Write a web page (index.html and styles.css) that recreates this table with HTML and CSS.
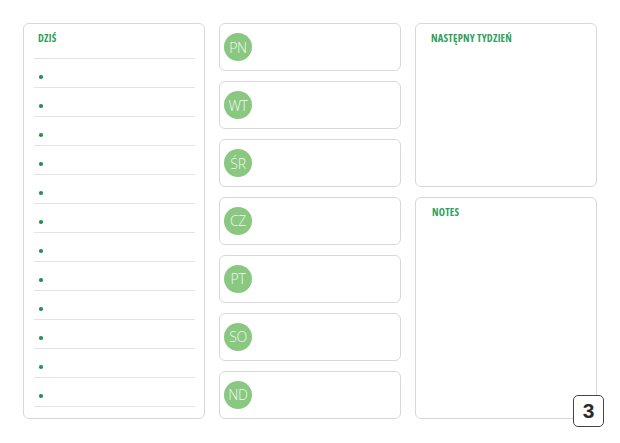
FILE: index.html
```html
<!DOCTYPE html>
<html lang="pl">
<head>
<meta charset="utf-8">
<title>Planer</title>
<link rel="stylesheet" href="styles.css">
</head>
<body>
<div class="page">
  <section class="panel today">
    <h2 class="today-head">DZIŚ</h2>
    <ul class="todo">
      <li></li><li></li><li></li><li></li><li></li><li></li>
      <li></li><li></li><li></li><li></li><li></li><li></li>
    </ul>
  </section>
  <section class="days">
    <div class="panel day"><span class="badge-day">PN</span></div>
    <div class="panel day"><span class="badge-day">WT</span></div>
    <div class="panel day"><span class="badge-day">ŚR</span></div>
    <div class="panel day"><span class="badge-day">CZ</span></div>
    <div class="panel day"><span class="badge-day">PT</span></div>
    <div class="panel day"><span class="badge-day">SO</span></div>
    <div class="panel day"><span class="badge-day">ND</span></div>
  </section>
  <section class="side">
    <div class="panel next"><h2 class="side-head">NASTĘPNY TYDZIEŃ</h2></div>
    <div class="panel notes"><h2 class="side-head notes-head">NOTES</h2></div>
  </section>
  <div class="page-num">3</div>
</div>
</body>
</html>
```
FILE: styles.css
```css
* { box-sizing: border-box; }
html, body { margin: 0; padding: 0; background: #fff; }
body { font-family: "Open Sans", "DejaVu Sans", sans-serif; }

.page {
  position: relative;
  width: 620px;
  height: 443px;
  padding: 23px 0 0 23px;
  display: flex;
  gap: 14px;
}

.panel {
  border: 1px solid #d8d8d8;
  border-radius: 6px;
  background: #fff;
}

.today {
  width: 182px;
  height: 396px;
  padding: 0 9px 0 10px;
}
.today-head {
  margin: 0;
  height: 35px;
  border-bottom: 1px solid #e3e3e3;
  padding: 8px 0 0 4px;
  font-size: 10.5px;
  line-height: 13px;
  font-weight: 700;
  font-stretch: 80%;
  color: #2ea05c;
  letter-spacing: 0.2px;
}
.todo {
  list-style: none;
  margin: 0;
  padding: 0;
}
.todo li {
  height: 29px;
  border-bottom: 1px solid #e3e3e3;
  padding: 16px 0 0 5px;
}
.todo li::before {
  content: "";
  display: block;
  width: 3.5px;
  height: 3.5px;
  border-radius: 50%;
  background: #27924a;
}

.days {
  width: 182px;
  height: 396px;
  display: flex;
  flex-direction: column;
  gap: 9.5px;
}
.day {
  flex: 1;
  display: flex;
  align-items: center;
  padding-left: 4px;
}
.badge-day {
  width: 28px;
  height: 28px;
  border-radius: 50%;
  background: #8ac882;
  color: #f1f8ef;
  font-size: 14px;
  font-weight: 300;
  display: flex;
  align-items: center;
  justify-content: center;
  letter-spacing: -0.3px;
}

.side {
  width: 182px;
  height: 396px;
  display: flex;
  flex-direction: column;
  gap: 10px;
}
.next { height: 164px; }
.notes { flex: 1; }
.side-head {
  margin: 0;
  padding: 8px 0 0 15px;
  font-size: 10.5px;
  line-height: 13px;
  font-weight: 700;
  font-stretch: 80%;
  color: #2ea05c;
  letter-spacing: 0.2px;
}
.notes-head { padding-left: 16px; padding-top: 8px; }

.page-num {
  position: absolute;
  left: 573px;
  top: 395px;
  width: 31px;
  height: 32px;
  border: 1.5px solid #454545;
  border-radius: 5px;
  background: #fff;
  color: #2b2b2b;
  font-family: "Liberation Sans", Arial, sans-serif;
  font-weight: 700;
  font-size: 21px;
  display: flex;
  align-items: center;
  justify-content: center;
}
```
